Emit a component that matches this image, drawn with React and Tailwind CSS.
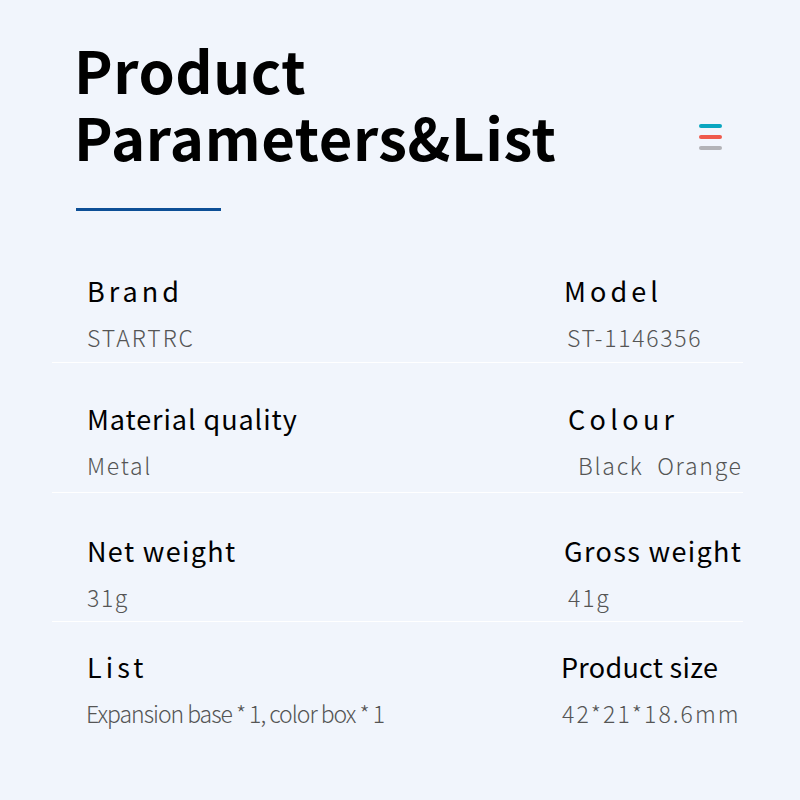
import React from "react";

const font = { fontFamily: '"Noto Sans CJK SC", "Noto Sans", sans-serif' };

const rows = [
  {
    pad: "pt-[2px] pb-[11px]",
    left: { label: "Brand", labelCls: "tracking-[0.15em]", value: "STARTRC", valueCls: "tracking-[0.085em]" },
    right: { label: "Model", labelCls: "tracking-[0.15em]", value: "ST-1146356", valueCls: "tracking-[0.075em] ml-[3px]" },
  },
  {
    pad: "pt-[41px] pb-[13px]",
    left: { label: "Material quality", labelCls: "tracking-[0.034em]", value: "Metal", valueCls: "tracking-[0.075em]" },
    right: { label: "Colour", labelCls: "tracking-[0.16em] ml-[4px]", value: "Black\u00a0 Orange", valueCls: "tracking-[0.075em] ml-[14px]" },
  },
  {
    pad: "pt-[43px] pb-[10px]",
    left: { label: "Net weight", labelCls: "tracking-[0.05em]", value: "31g", valueCls: "tracking-[0.07em]" },
    right: { label: "Gross weight", labelCls: "tracking-[0.05em]", value: "41g", valueCls: "tracking-[0.08em] ml-[4px]" },
  },
  {
    pad: "pt-[30px] pb-0",
    noBorder: true,
    left: { label: "List", labelCls: "tracking-[0.15em]", value: "Expansion base * 1, color box * 1", valueCls: "tracking-[-0.045em] -ml-[1px]" },
    right: { label: "Product size", labelCls: "tracking-[0.01em] -ml-[3px]", value: "42*21*18.6mm", valueCls: "tracking-[0.09em] -ml-[2px]" },
  },
];

const Cell = ({ item, className }) => (
  <div className={`whitespace-nowrap ${className}`}>
    <div className={`text-[27px] leading-[30px] font-normal text-black ${item.labelCls}`}>{item.label}</div>
    <div className={`mt-[17px] text-[23px] leading-[28px] font-light text-[#555] ${item.valueCls}`}>{item.value}</div>
  </div>
);

const App = () => {
  return (
    <div className="w-[800px] h-[800px] bg-[#f1f5fc] overflow-hidden" style={font}>
      <div className="flex justify-between pl-[74px] pr-[78px] pt-[36px]">
        <h1 className="text-[58px] leading-[67px] font-bold text-black tracking-[0.01em]">
          Product
          <br />
          Parameters&amp;List
        </h1>
        <div className="mt-[88px] flex flex-col gap-[7px] w-[23px]">
          <div className="h-[4px] rounded-full bg-[#0aa6c0]" />
          <div className="h-[4px] rounded-full bg-[#ef5a4c]" />
          <div className="h-[4px] rounded-full bg-[#b3b3b7]" />
        </div>
      </div>
      <div className="ml-[76px] mt-[38px] w-[145px] h-[3px] bg-[#0d4f96]" />
      <div className="ml-[52px] mr-[57px] mt-[63px]">
        {rows.map((row, i) => (
          <div
            key={i}
            className={`flex ${row.pad} ${row.noBorder ? "" : "border-b border-white"}`}
          >
            <Cell item={row.left} className="pl-[35px] w-[512px]" />
            <Cell item={row.right} className="flex-1" />
          </div>
        ))}
      </div>
    </div>
  );
};

export default App;
